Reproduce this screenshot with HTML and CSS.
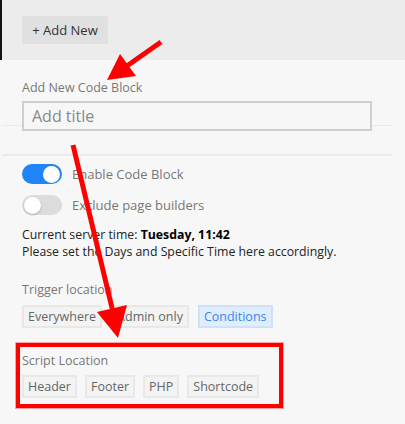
FILE: index.html
```html
<!DOCTYPE html>
<html>
<head>
<meta charset="utf-8">
<link rel="stylesheet" href="styles.css">
</head>
<body>
<div class="topbar">
  <button class="add-btn">+ Add New</button>
</div>
<div class="panel">
  <div class="label">Add New Code Block</div>
  <div class="title-field"><input class="title-input" type="text" placeholder="Add title"></div>
  <div class="sep"></div>
  <div class="toggle-row"><span class="toggle on"><span class="knob"></span></span><span class="toggle-label">Enable Code Block</span></div>
  <div class="toggle-row second"><span class="toggle"><span class="knob"></span></span><span class="toggle-label">Exclude page builders</span></div>
  <p class="info">Current server time: <b>Tuesday, 11:42</b><br>Please set the Days and Specific Time here accordingly.</p>
  <div class="label trigger">Trigger location</div>
  <div class="chips">
    <span class="chip">Everywhere</span>
    <span class="chip">Admin only</span>
    <span class="chip active">Conditions</span>
  </div>
  <div class="highlight">
    <div class="label">Script Location</div>
    <div class="chips">
      <span class="chip">Header</span>
      <span class="chip">Footer</span>
      <span class="chip">PHP</span>
      <span class="chip">Shortcode</span>
    </div>
  </div>
</div>
<svg class="arrows" width="405" height="424" viewBox="0 0 405 424">
  <line x1="161" y1="42" x2="124" y2="68" stroke="#ff0000" stroke-width="5"/>
  <polygon points="107,80 120,54 136,76" fill="#ff0000"/>
  <line x1="73" y1="145" x2="113" y2="312" stroke="#ff0000" stroke-width="5"/>
  <polygon points="118,338 97,312 127,305" fill="#ff0000"/>
</svg>
</body>
</html>
```
FILE: styles.css
```css
html, body {
  margin: 0;
  padding: 0;
}
body {
  width: 405px;
  height: 424px;
  background: #f7f7f7;
  font-family: "Open Sans", "Noto Sans", sans-serif;
  font-size: 12.5px;
  color: #222;
  position: relative;
  overflow: hidden;
}
.topbar {
  height: 60px;
  background: #ececec;
  border-left: 2px solid #111;
  box-sizing: border-box;
  padding: 16px 0 0 20px;
}
.add-btn {
  height: 28px;
  width: 86px;
  border: none;
  border-radius: 2px;
  background: #e0e0e0;
  color: #333;
  font-family: inherit;
  font-size: 13px;
  padding: 0;
}
.panel {
  padding: 19px 0 0 22px;
}
.label {
  color: #777;
  line-height: 18px;
  height: 18px;
}
.title-field {
  margin: 4px 0 0 -20px;
  padding-left: 20px;
  width: 370px;
  background: linear-gradient(#ebebeb, #ebebeb) 0 24px / 100% 1px no-repeat;
}
.title-input {
  display: block;
  box-sizing: border-box;
  width: 350px;
  height: 30px;
  border: 2px solid #cfcfcf;
  background: #f7f7f7;
  font-family: inherit;
  font-size: 16px;
  padding: 0 8px;
  outline: none;
}
.title-input::placeholder {
  color: #888;
}
.sep {
  margin: 23px 0 0 -20px;
  width: 390px;
  height: 2px;
  background: #ebebeb;
}
.toggle-row {
  display: flex;
  align-items: center;
  gap: 10px;
  margin-top: 8px;
  height: 20px;
}
.toggle-row.second {
  margin-top: 11px;
}
.toggle {
  width: 40px;
  height: 20px;
  border-radius: 10px;
  background: #dcdcdc;
  display: flex;
  align-items: center;
  padding: 0 2px;
  box-sizing: border-box;
}
.toggle.on {
  background: #1f84f7;
  justify-content: flex-end;
}
.knob {
  width: 17px;
  height: 17px;
  border-radius: 50%;
  background: #fff;
  box-shadow: 0 1px 2px rgba(0,0,0,0.25);
}
.toggle.on .knob {
  box-shadow: none;
}
.toggle-label {
  color: #777;
  font-size: 13px;
}
.info {
  margin: 11px 0 0 0;
  line-height: 17px;
  font-size: 12.3px;
  color: #222;
}
.info b {
  color: #000;
}
.trigger {
  margin-top: 21px;
}
.chips {
  display: flex;
  gap: 9px;
  margin-top: 6px;
}
.chip {
  height: 23px;
  box-sizing: border-box;
  padding: 0 4px;
  border: 2px solid #e8e8e8;
  background: #f3f3f3;
  color: #666;
  line-height: 19px;
}
.chip.active {
  background: #dfedfd;
  border-color: #cde1fa;
  color: #3a86ef;
}
.highlight {
  margin: 15px 0 0 -6px;
  width: 267px;
  box-sizing: border-box;
  border: 4px solid #ff0000;
  box-shadow: 0 0 0 1px rgba(255, 80, 80, 0.5);
  padding: 5px 0 6px 2px;
}
.highlight .chips {
  margin-top: 5px;
  gap: 8px;
}
.arrows {
  position: absolute;
  top: 0;
  left: 0;
  pointer-events: none;
}
```
